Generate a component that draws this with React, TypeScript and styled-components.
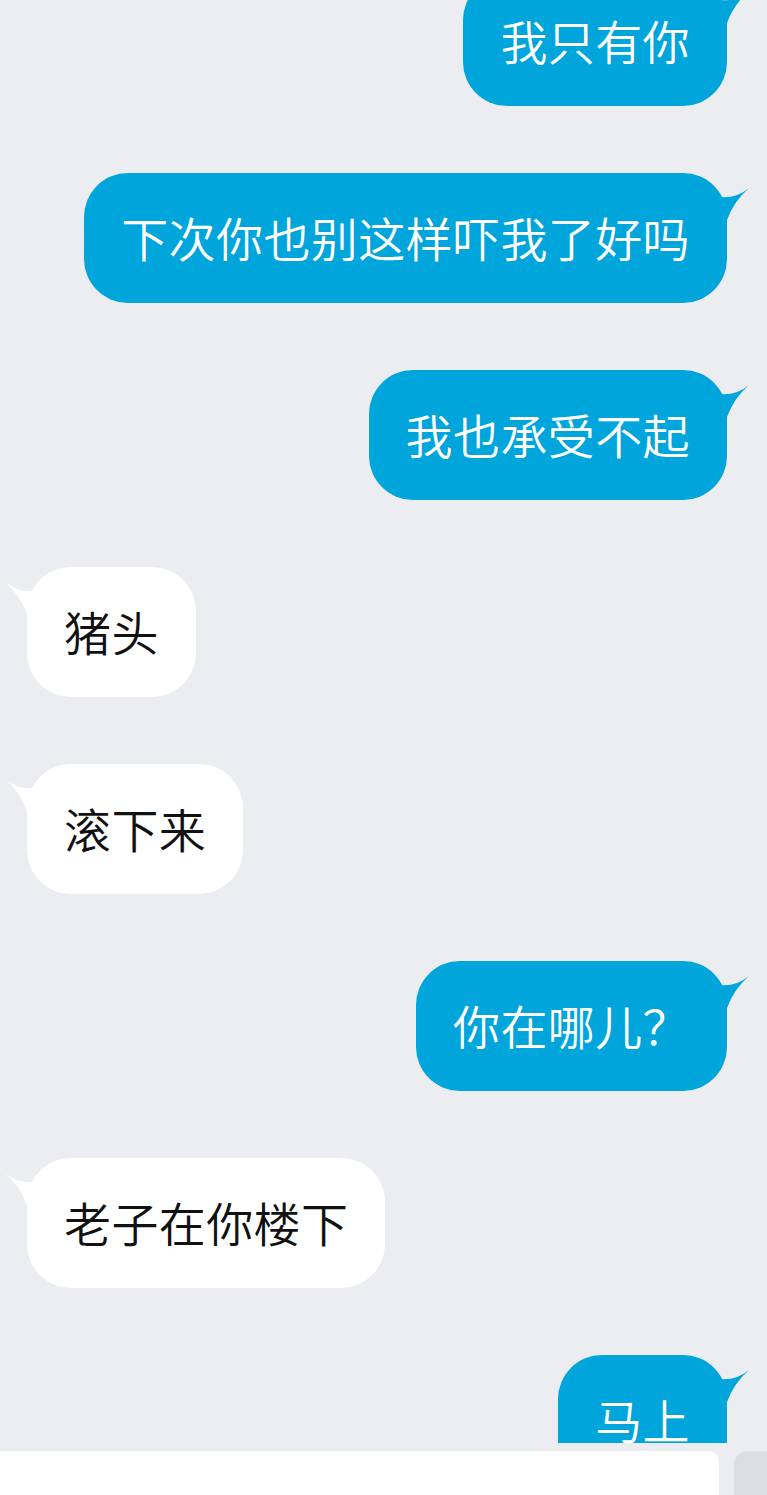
import React from "react";
import styled, { createGlobalStyle } from "styled-components";

const Global = createGlobalStyle`
  html, body { margin: 0; padding: 0; background: #ebedf0; }
  body { font-family: "Noto Sans CJK SC", "Noto Sans", sans-serif; }
`;

const Page = styled.div`
  width: 767px;
  height: 1495px;
  display: flex;
  flex-direction: column;
  background: #ebedf0;
  overflow: hidden;
`;

const ChatArea = styled.div`
  height: 1443px;
  overflow: hidden;
  display: flex;
  flex-direction: column;
  gap: 67px;
  padding: 0 40px 0 27px;
  box-sizing: border-box;
`;

const Row = styled.div<{ $side: "left" | "right" }>`
  display: flex;
  justify-content: ${(p) => (p.$side === "right" ? "flex-end" : "flex-start")};
  flex-shrink: 0;
  &:first-child { margin-top: -24px; }
`;

const Bubble = styled.div<{ $side: "left" | "right" }>`
  position: relative;
  height: 130px;
  box-sizing: border-box;
  display: flex;
  align-items: center;
  padding: 0 37px 4px 37px;
  border-radius: 44px;
  font-size: 47px;
  font-weight: 350;
  letter-spacing: 0.4px;
  white-space: nowrap;
  background: ${(p) => (p.$side === "right" ? "#00a5dc" : "#ffffff")};
  color: ${(p) => (p.$side === "right" ? "#ffffff" : "#111111")};
`;

const Tail = styled.svg<{ $side: "left" | "right" }>`
  position: absolute;
  top: 9px;
  width: 30px;
  height: 40px;
  ${(p) =>
    p.$side === "right"
      ? "right: -22px;"
      : "left: -22px; transform: scaleX(-1);"}
`;

const InputBar = styled.div`
  margin-top: 8px;
  flex: 1;
  display: flex;
  gap: 15px;
`;

const InputBox = styled.div`
  width: 719px;
  background: #ffffff;
  border-top-right-radius: 10px;
`;

const SideButton = styled.div`
  flex: 1;
  background: #dcdee2;
  border-top-left-radius: 14px;
`;

type Msg = { side: "left" | "right"; text: string };

const messages: Msg[] = [
  { side: "right", text: "我只有你" },
  { side: "right", text: "下次你也别这样吓我了好吗" },
  { side: "right", text: "我也承受不起" },
  { side: "left", text: "猪头" },
  { side: "left", text: "滚下来" },
  { side: "right", text: "你在哪儿？" },
  { side: "left", text: "老子在你楼下" },
  { side: "right", text: "马上" },
];

export default function App() {
  return (
    <Page>
      <Global />
      <ChatArea>
        {messages.map((m, i) => (
          <Row key={i} $side={m.side}>
            <Bubble $side={m.side}>
              {m.text}
              <Tail $side={m.side} viewBox="0 0 30 40">
                <path
                  d="M0 15 Q17 17 30 6 Q15 19 8 38 L0 38 Z"
                  fill={m.side === "right" ? "#00a5dc" : "#ffffff"}
                />
              </Tail>
            </Bubble>
          </Row>
        ))}
      </ChatArea>
      <InputBar>
        <InputBox />
        <SideButton />
      </InputBar>
    </Page>
  );
}
